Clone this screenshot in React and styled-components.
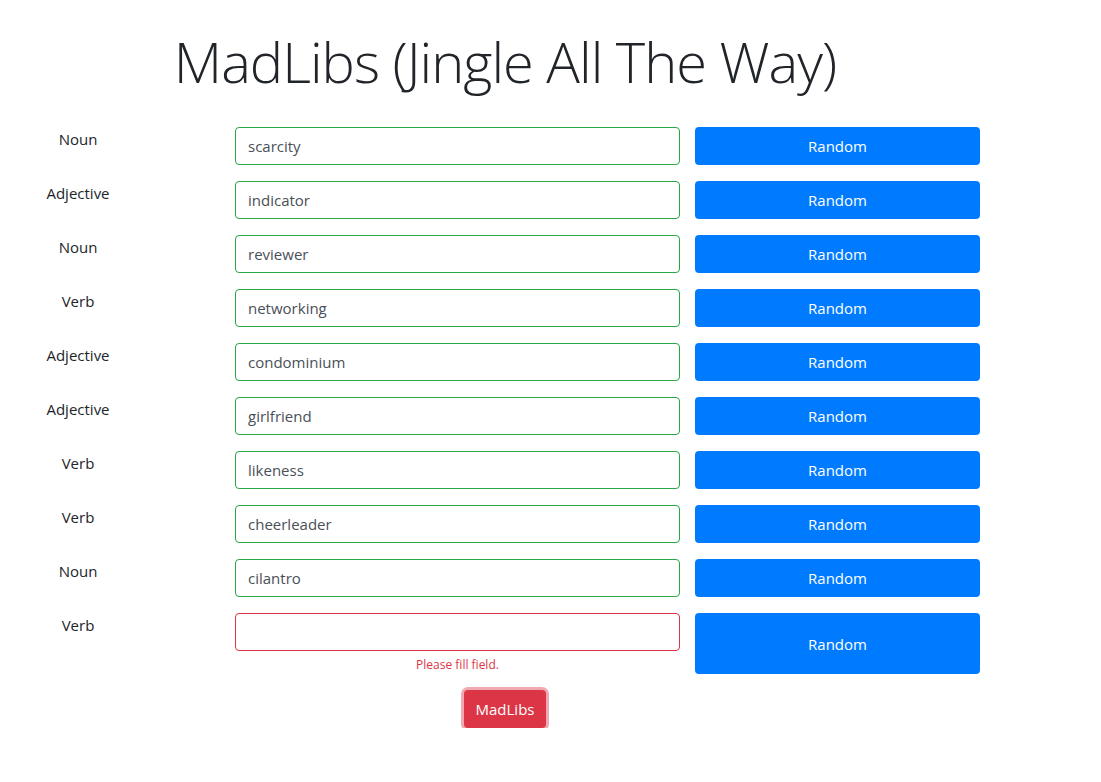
import React from "react";
import styled, { createGlobalStyle } from "styled-components";

const fields = [
    { label: "Noun", value: "scarcity" },
    { label: "Adjective", value: "indicator" },
    { label: "Noun", value: "reviewer" },
    { label: "Verb", value: "networking" },
    { label: "Adjective", value: "condominium" },
    { label: "Adjective", value: "girlfriend" },
    { label: "Verb", value: "likeness" },
    { label: "Verb", value: "cheerleader" },
    { label: "Noun", value: "cilantro" },
    { label: "Verb", value: "" },
];

const App = () => {
    return (
        <Page>
            <GlobalStyle />
            <Title>MadLibs (Jingle All The Way)</Title>
            <Form onSubmit={(e) => e.preventDefault()}>
                {fields.map((item, i) => {
                    const invalid = item.value === "";
                    return (
                        <Row key={i}>
                            <Label>{item.label}</Label>
                            <InputCol>
                                <Input
                                    type="text"
                                    defaultValue={item.value}
                                    invalid={invalid ? 1 : 0}
                                />
                                {invalid && (
                                    <Feedback>Please fill field.</Feedback>
                                )}
                            </InputCol>
                            <RandomButton type="button">Random</RandomButton>
                        </Row>
                    );
                })}
                <Submit>
                    <SubmitButton type="submit">MadLibs</SubmitButton>
                </Submit>
            </Form>
        </Page>
    );
};

export default App;

const GlobalStyle = createGlobalStyle`
    body {
        margin: 0;
        background: #fff;
        font-family: "Open Sans", "Noto Sans", sans-serif;
        color: #212529;
        font-size: 16px;
    }
`;
const Page = styled.div`
    width: 1010px;
    padding-top: 28px;
`;
const Title = styled.h1`
    margin: 0 0 32px;
    text-align: center;
    font-size: 56px;
    font-weight: 300;
    line-height: 67px;
    letter-spacing: -1px;
    color: #212529;
`;
const Form = styled.form`
    display: flex;
    flex-direction: column;
    gap: 16px;
`;
const Row = styled.div`
    display: flex;
    align-items: stretch;
`;
const Label = styled.div`
    width: 156px;
    margin-right: 79px;
    text-align: center;
    font-size: 15px;
    line-height: 24px;
    color: #212529;
`;
const InputCol = styled.div`
    width: 445px;
    margin-right: 15px;
    display: flex;
    flex-direction: column;
`;
const Input = styled.input`
    box-sizing: border-box;
    height: 38px;
    width: 100%;
    padding: 6px 12px;
    font-family: inherit;
    font-size: 15px;
    color: #495057;
    background: #fff;
    border: 1px solid ${(p) => (p.invalid ? "#dc3545" : "#28a745")};
    border-radius: 4px;
    outline: none;
`;
const Feedback = styled.div`
    margin-top: 5px;
    text-align: center;
    font-size: 12px;
    line-height: 18px;
    color: #dc3545;
`;
const RandomButton = styled.button`
    width: 285px;
    min-height: 38px;
    border: none;
    border-radius: 4px;
    background: #007bff;
    color: #fff;
    font-family: inherit;
    font-size: 15px;
    cursor: pointer;
`;
const Submit = styled.div`
    display: flex;
    justify-content: center;
`;
const SubmitButton = styled.button`
    height: 38px;
    padding: 0 12px;
    border: none;
    border-radius: 4px;
    background: #dc3545;
    color: #fff;
    font-family: inherit;
    font-size: 15px;
    box-shadow: 0 0 0 3px rgba(225, 83, 97, 0.5);
    cursor: pointer;
`;
